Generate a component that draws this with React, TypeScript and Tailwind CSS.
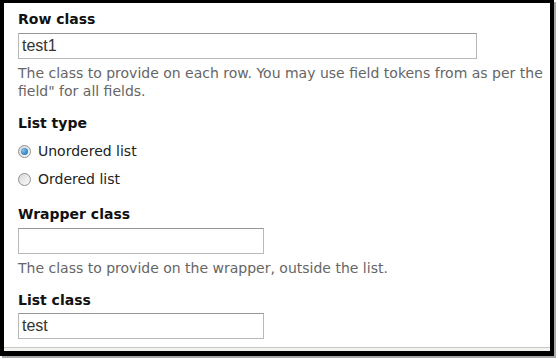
import React from 'react';

const labelCls = "block text-[14px] leading-[17px] font-bold text-[#111] font-['DejaVu_Sans',sans-serif]";
const descCls = "text-[14px] leading-[18px] text-[#666] font-['DejaVu_Sans',sans-serif]";
const inputCls = "block h-[26px] border border-[#b8b8b8] border-t-[#969696] px-[3px] text-[16px] text-[#333] font-['Liberation_Sans',Arial,sans-serif] outline-none bg-white";

const Radio: React.FC<{ label: string; checked?: boolean; className?: string }> = ({ label, checked, className }) => (
  <label className={`flex items-center h-[20px] gap-[7px] ${className ?? ''}`}>
    <span className="w-[13px] h-[13px] rounded-full border border-[#8f8f8f] bg-gradient-to-br from-[#d8d8d8] to-[#fbfbfb] flex items-center justify-center">
      {checked && <span className="w-[7px] h-[7px] rounded-full bg-[radial-gradient(circle_at_35%_35%,#7fc4f0,#0b5fa8)]" />}
    </span>
    <span className="text-[14px] text-[#222] font-['DejaVu_Sans',sans-serif]">{label}</span>
  </label>
);

export default function App() {
  return (
    <div className="w-[558px] h-[359px] bg-white overflow-hidden">
      <div className="w-[554px] h-[356px] border-black border-l-4 border-t-[3px] border-r-4 border-b-[5px] shadow-[2px_2px_0_#a8a8a8] flex flex-col">
        <div className="flex-1 bg-white pl-[14px] pt-[8px]">
          <label className={labelCls}>Row class</label>
          <input className={`${inputCls} mt-[5px] w-[459px]`} defaultValue="test1" />
          <p className={`${descCls} mt-[5px]`}>
            The class to provide on each row. You may use field tokens from as per the field" for all fields.
          </p>

          <label className={`${labelCls} mt-[15px]`}>List type</label>
          <Radio label="Unordered list" checked className="mt-[9px]" />
          <Radio label="Ordered list" className="mt-[8px]" />

          <label className={`${labelCls} mt-[17px]`}>Wrapper class</label>
          <input className={`${inputCls} mt-[5px] w-[246px]`} defaultValue="" />
          <p className={`${descCls} mt-[5px]`}>The class to provide on the wrapper, outside the list.</p>

          <label className={`${labelCls} mt-[15px]`}>List class</label>
          <input className={`${inputCls} mt-[4px] w-[246px]`} defaultValue="test" />
        </div>
        <div className="h-[4px] border-t border-[#c8c8c8] bg-[#f2f2ee]" />
      </div>
    </div>
  );
}
